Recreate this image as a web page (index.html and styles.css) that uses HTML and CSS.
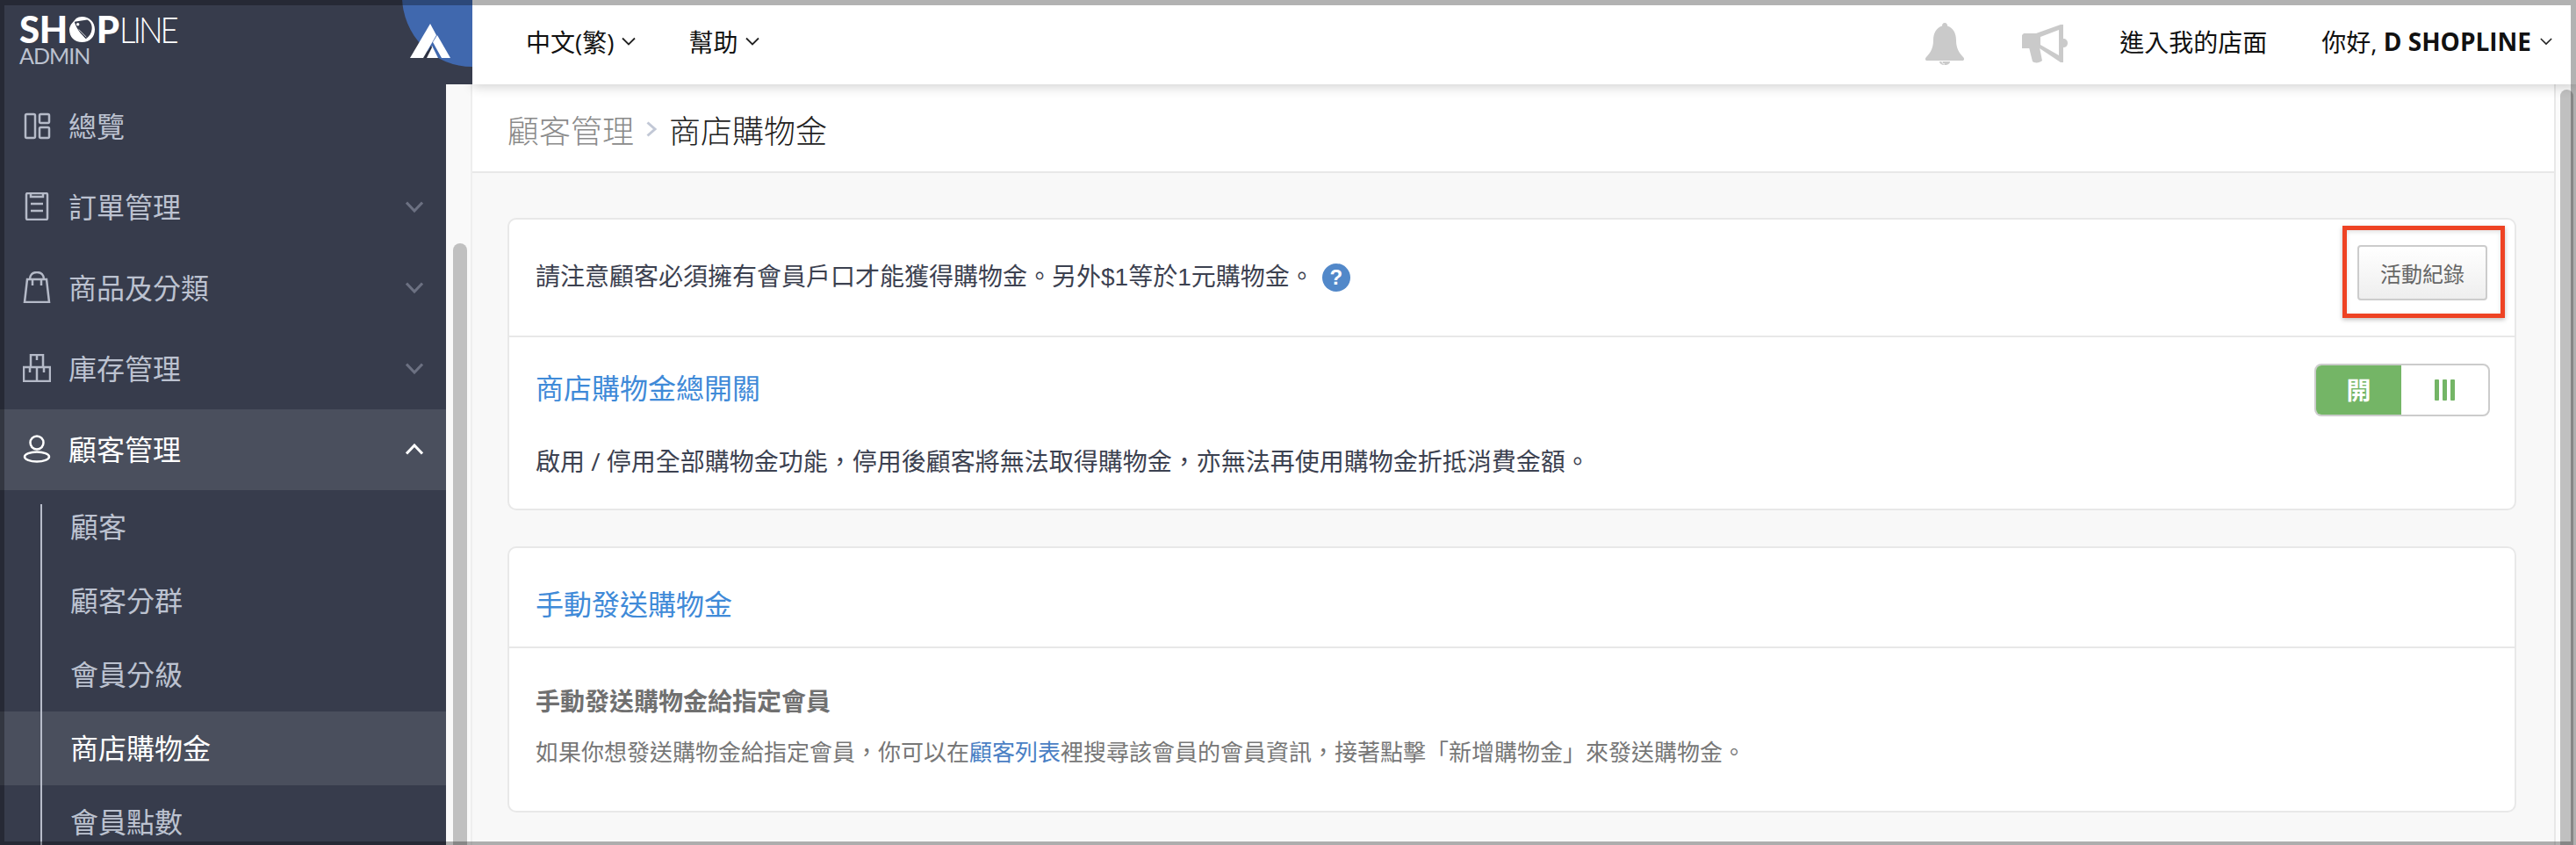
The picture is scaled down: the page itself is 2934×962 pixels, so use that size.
FILE: index.html
```html
<!DOCTYPE html>
<html lang="zh-Hant">
<head>
<meta charset="utf-8">
<title>商店購物金</title>
<link rel="stylesheet" href="styles.css">
</head>
<body>
<div class="app">
  <div class="brand">
    <div class="brand-circle"></div>
    <div class="logo">
      <div class="logo-main"><span class="logo-bold">SH</span><svg class="logo-o" viewBox="0 0 30 30" aria-label="O"><path fill="#fff" d="M15 0C23 0 30 6 30 15c0 9-6 15-15 15S0 24 0 15C0 13 1 11 2 9L8 2C10 1 12 0 15 0z"/><path fill="#373c4c" d="M6 6 21 3.500c4 2 6 6 5.500 11-.5 5-3 9-7 11.500C14 21 8 14 6 6z"/><circle cx="10" cy="9" r="1.800" fill="#fff"/><path stroke="#fff" stroke-width=".8" fill="none" d="M11 15 20 24M10 18 18 26"/></svg><span class="logo-bold">P</span><span class="logo-thin">LINE</span></div>
      <div class="logo-sub">ADMIN</div>
    </div>
    <svg class="brand-mark" viewBox="0 0 46 39"><path fill="#fff" d="M23 0 0 39H15L30 13Z"/><path fill="#fff" d="M31 13 46 39H36L26 21Z"/><path fill="#fff" d="M17 39 25 25 32 39Z"/><path fill="#2c3040" d="M16 39 24 25 25 27 19 39Z"/></svg>
  </div>

  <header class="topbar">
    <nav class="topnav">
      <a class="topnav-item">中文(繁)<svg class="caret" viewBox="0 0 16 10"><path d="M1 1.500 8 8.500 15 1.500"/></svg></a>
      <a class="topnav-item">幫助<svg class="caret" viewBox="0 0 16 10"><path d="M1 1.500 8 8.500 15 1.500"/></svg></a>
    </nav>
    <div class="topright">
      <svg class="bell" viewBox="0 0 46 48"><path fill="#cacaca" d="M23 0c2 0 3 1.500 3 3.500C33 6 36 12 36 20c0 8 3 14 8 19 2 2 1 4-1 4H3c-2 0-3-2-1-4 5-5 8-11 8-19 0-8 3-14 10-16.500C20 1.500 21 0 23 0z"/><path fill="#cacaca" d="M17 44h12c0 2-2 4-6 4s-6-2-6-4z"/><path fill="none" stroke="#fff" d="M20 44c0 2 1 3 3 3"/></svg>
      <svg class="megaphone" viewBox="0 0 52 44"><path fill="#cacaca" d="M2 10H16L44 0h3V43h-3L20 27H0V12Z"/><path fill="#fff" d="M21 14 42 6V35L21 23Z"/><path fill="#cacaca" d="M47 16c3 0 5 2 5 5s-2 5-5 5zM8 26H20l3 15c-3 3-9 3-11 1Z"/></svg>
      <a class="store-link">進入我的店面</a>
      <a class="user">你好, <b>D SHOPLINE</b><svg class="caret caret-user" viewBox="0 0 16 10"><path d="M1 1.500 8 8.500 15 1.500"/></svg></a>
    </div>
  </header>

  <aside class="sidebar">
    <ul class="menu">
      <li class="menu-item">
        <svg class="menu-icon" viewBox="0 0 32 32"><rect x="3" y="3" width="11" height="27" rx="1.500"/><rect x="19" y="3" width="11" height="10" rx="1.500"/><rect x="19" y="18" width="11" height="12" rx="1.500"/></svg>
        <span>總覽</span>
      </li>
      <li class="menu-item">
        <svg class="menu-icon" viewBox="0 0 32 32"><rect x="4" y="1" width="24" height="30" rx="1.500"/><path d="M9 1V5H23V1M9 13H23M9 21H23"/></svg>
        <span>訂單管理</span>
        <svg class="chev" viewBox="0 0 20 13"><path d="M1 1.500 10 11 19 1.500"/></svg>
      </li>
      <li class="menu-item">
        <svg class="menu-icon menu-icon-tall" viewBox="0 0 32 36"><path d="M5 9H27L30 35H2Z"/><path d="M8 9C8 4 11 1 16 1S24 4 24 9M11 9V16M21 9V16"/></svg>
        <span>商品及分類</span>
        <svg class="chev" viewBox="0 0 20 13"><path d="M1 1.500 10 11 19 1.500"/></svg>
      </li>
      <li class="menu-item">
        <svg class="menu-icon" viewBox="0 0 32 32"><path d="M9 1H23V15H9ZM1 15H16V31H1ZM16 15H31V31H16Z"/><path d="M16 1V7M8 15V21M24 15V21"/></svg>
        <span>庫存管理</span>
        <svg class="chev" viewBox="0 0 20 13"><path d="M1 1.500 10 11 19 1.500"/></svg>
      </li>
      <li class="menu-item menu-item-active">
        <svg class="menu-icon" viewBox="0 0 32 32"><circle cx="16" cy="9" r="7.500"/><ellipse cx="16" cy="25" rx="14" ry="5.500"/></svg>
        <span>顧客管理</span>
        <svg class="chev" viewBox="0 0 20 13"><path d="M1 11.500 10 2 19 11.500"/></svg>
      </li>
    </ul>
    <ul class="submenu">
      <li class="sub-item">顧客</li>
      <li class="sub-item">顧客分群</li>
      <li class="sub-item">會員分級</li>
      <li class="sub-item sub-item-active">商店購物金</li>
      <li class="sub-item">會員點數</li>
    </ul>
  </aside>

  <div class="content-area">
    <div class="side-gutter"><div class="side-thumb"></div></div>
    <main class="main">
      <div class="breadcrumb">
        <span class="crumb-parent">顧客管理</span>
        <svg class="crumb-sep" viewBox="0 0 12 18"><path d="M1.500 1.500 10 9 1.500 16.500"/></svg>
        <span class="crumb-current">商店購物金</span>
      </div>
      <div class="content">
        <section class="card">
          <div class="notice-row">
            <p class="notice">請注意顧客必須擁有會員戶口才能獲得購物金。另外$1等於1元購物金。<span class="help">?</span></p>
            <div class="btn-wrap"><button class="btn">活動紀錄</button></div>
          </div>
          <div class="switch-row">
            <div class="switch-head">
              <h2 class="card-title">商店購物金總開關</h2>
              <div class="toggle"><span class="toggle-on">開</span><span class="toggle-off"><i></i><i></i><i></i></span></div>
            </div>
            <p class="switch-desc">啟用 / 停用全部購物金功能，停用後顧客將無法取得購物金，亦無法再使用購物金折抵消費金額。</p>
          </div>
        </section>
        <section class="card card-second">
          <div class="card-head"><h2 class="card-title">手動發送購物金</h2></div>
          <div class="card-body">
            <h3 class="subtitle">手動發送購物金給指定會員</h3>
            <p class="para">如果你想發送購物金給指定會員，你可以在<a class="link">顧客列表</a>裡搜尋該會員的會員資訊，接著點擊「新增購物金」來發送購物金。</p>
          </div>
        </section>
      </div>
    </main>
    <div class="page-gutter"><div class="page-thumb"></div></div>
  </div>
</div>
<div class="frame"></div>
</body>
</html>
```
FILE: styles.css
```css
* { box-sizing: border-box; }
html, body { margin: 0; height: 100%; overflow: hidden; }
body {
  font-family: "Open Sans", "Noto Sans CJK TC", sans-serif;
  background: #f8f8f8;
  color: #3c4150;
}
ul { list-style: none; margin: 0; padding: 0; }
h2, h3, p { margin: 0; font-weight: 400; }

.app {
  display: grid;
  grid-template-columns: 538px 1fr;
  grid-template-rows: 96px 1fr;
  height: 100vh;
}

/* brand */
.brand {
  position: relative;
  z-index: 3;
  overflow: hidden;
  background: #373c4c;
  display: flex;
  padding: 18px 0 0 22px;
}
.brand-circle {
  position: absolute;
  right: -80px;
  top: -84px;
  width: 160px;
  height: 160px;
  border-radius: 50%;
  background: #4068ae;
}
.logo { position: relative; }
.logo-main {
  display: flex;
  align-items: center;
  height: 30px;
  line-height: 30px;
  font-family: Lato, sans-serif;
  font-size: 42px;
  color: #fff;
}
.logo-bold { font-weight: 900; letter-spacing: -.5px; }
.logo-thin {
  font-weight: 300;
  letter-spacing: -3.500px;
  margin-left: 1px;
  transform: scaleX(.87);
  transform-origin: left center;
}
.logo-o { width: 29px; height: 29px; margin: 0 2px; }
.logo-sub {
  font-family: Lato, sans-serif;
  font-size: 25px;
  line-height: 18px;
  margin-top: 6px;
  color: #bcc2d0;
  letter-spacing: -1px;
}
.brand-mark {
  position: absolute;
  left: 467px;
  top: 27px;
  width: 46px;
  height: 39px;
}

/* top bar */
.topbar {
  position: relative;
  z-index: 2;
  background: #fff;
  box-shadow: 0 3px 12px rgba(0, 0, 0, .18);
  display: flex;
  justify-content: space-between;
  align-items: center;
  padding: 0 27px 2px 61px;
  font-size: 28px;
  color: #111;
}
.topnav { display: flex; gap: 61px; }
.topnav-item, .user { display: flex; align-items: center; }
.topnav-item { gap: 8px; }
.caret { width: 16px; height: 10px; fill: none; stroke: #222; stroke-width: 1.800; }
.topright { display: flex; align-items: center; }
.bell { width: 46px; height: 48px; margin-top: 6px; }
.megaphone { width: 52px; height: 44px; margin: 6px 0 0 65px; }
.store-link { margin-left: 59px; }
.user { margin-left: 62px; white-space: pre; }
.user b { font-weight: 700; }
.caret-user { width: 14px; margin-left: 10px; }

/* sidebar */
.sidebar {
  background: #373c4c;
  width: 508px;
  overflow: hidden;
  padding-top: 2px;
  color: #bcc2d0;
  font-size: 32px;
  font-family: "Noto Sans CJK TC", sans-serif;
}
.menu-item {
  display: flex;
  align-items: center;
  height: 92px;
  padding: 0 26px 2px;
  gap: 20px;
}
.menu-item span { flex: 1; margin-top: -3px; }
.menu-item-active { background: #4a4f5d; color: #fff; }
.menu-icon {
  flex: none;
  width: 32px;
  height: 32px;
  fill: none;
  stroke: #b5bac8;
  stroke-width: 2.500;
}
.menu-icon-tall { height: 36px; }
.menu-item-active .menu-icon { stroke: #fff; }
.chev { width: 20px; height: 13px; fill: none; stroke: #6c7182; stroke-width: 3; }
.menu-item-active .chev { stroke: #fff; }
.submenu { position: relative; }
.submenu::before {
  content: "";
  position: absolute;
  left: 46px;
  top: 16px;
  bottom: 0;
  width: 2px;
  background: #b8bdca;
}
.sub-item {
  height: 84px;
  line-height: 80px;
  padding-left: 80px;
}
.sub-item-active { background: #4a4f5d; color: #fff; }

/* content area */
.content-area {
  display: flex;
  min-height: 0;
  margin-left: -30px;
  grid-column: 2;
  grid-row: 2;
}
.side-gutter {
  width: 30px;
  flex: none;
  background: #f9f9f9;
  border-right: 2px solid #eee;
  padding: 181px 0 0 8px;
}
.side-thumb {
  width: 16px;
  height: 100%;
  border-radius: 8px 8px 0 0;
  background: #c0c0c0;
}
.main { flex: 1; min-width: 0; }
.breadcrumb {
  height: 101px;
  padding: 3px 0 0 40px;
  background: #fff;
  border-bottom: 2px solid #e8e8e8;
  display: flex;
  align-items: center;
  font-size: 36px;
  font-weight: 300;
  font-family: "Noto Sans CJK TC", sans-serif;
}
.crumb-parent { color: #8a8a8a; }
.crumb-current { color: #222; }
.crumb-sep {
  width: 12px;
  height: 18px;
  margin: 0 14px;
  fill: none;
  stroke: #c2c8d6;
  stroke-width: 3;
}
.content { padding: 51px 43px 0 40px; }
.page-gutter {
  width: 25px;
  flex: none;
  background: #fbfbfb;
  border-left: 2px solid #e8e8e8;
  padding: 6px 0 0 5px;
}
.page-thumb {
  width: 15px;
  height: 100%;
  border-radius: 8px 8px 0 0;
  background: #c0c0c0;
}

/* cards */
.card {
  background: #fff;
  border: 2px solid #e8e8e8;
  border-radius: 10px;
}
.card-second { margin-top: 41px; }
.notice-row {
  display: flex;
  justify-content: space-between;
  align-items: center;
  height: 134px;
  padding: 0 31px 0 30px;
  border-bottom: 2px solid #e8e8e8;
}
.notice {
  display: flex;
  align-items: center;
  font-family: "Liberation Sans", "Noto Sans CJK TC", sans-serif;
  font-size: 28px;
  line-height: 40px;
}
.help {
  display: inline-block;
  width: 32px;
  height: 32px;
  margin-left: 9px;
  border-radius: 50%;
  background: #5288c9;
  color: #fff;
  font-size: 24px;
  font-weight: 700;
  line-height: 32px;
  text-align: center;
}
.btn-wrap { position: relative; margin-bottom: 11px; }
.btn-wrap::after {
  content: "";
  position: absolute;
  left: -17px;
  right: -20px;
  top: -22px;
  bottom: -20px;
  border: 5px solid #ee4324;
  box-shadow: 0 2px 5px rgba(0, 0, 0, .25), inset 0 2px 5px rgba(0, 0, 0, .12);
  pointer-events: none;
}
.btn {
  display: block;
  width: 148px;
  height: 63px;
  padding: 0;
  font: inherit;
  font-size: 24px;
  color: #666;
  background: linear-gradient(#fff, #eee);
  border: 2px solid #ccc;
  border-radius: 4px;
}
.switch-row { padding: 30px 28px 34px 30px; }
.switch-head {
  display: flex;
  justify-content: space-between;
  align-items: center;
}
.card-title {
  font-size: 32px;
  line-height: 44px;
  color: #3f8ad8;
}
.switch-head .card-title { margin-top: -4px; }
.toggle {
  display: flex;
  width: 200px;
  height: 60px;
  border: 2px solid #ccc;
  border-radius: 8px;
  overflow: hidden;
}
.toggle-on {
  width: 97px;
  background: #74b566;
  color: #fff;
  font-size: 28px;
  font-weight: 700;
  line-height: 56px;
  text-align: center;
}
.toggle-off {
  flex: 1;
  display: flex;
  justify-content: center;
  align-items: center;
  gap: 4px;
}
.toggle-off i {
  width: 5px;
  height: 24px;
  background: #74b566;
  border-radius: 1px;
}
.switch-desc {
  margin-top: 31px;
  font-size: 28px;
  line-height: 40px;
}
.card-head {
  height: 114px;
  padding: 42px 30px 0;
  border-bottom: 2px solid #e8e8e8;
}
.card-body { padding: 40px 30px 47px; }
.subtitle {
  font-size: 28px;
  font-weight: 700;
  line-height: 40px;
  color: #707070;
}
.para {
  margin-top: 18px;
  font-size: 26px;
  line-height: 40px;
  color: #777;
}
.link { color: #4a80c4; }

/* window edge */
.frame {
  position: fixed;
  inset: 0;
  z-index: 10;
  border-style: solid;
  border-color: rgba(0, 0, 0, .3);
  border-width: 6px 6px 4px 5px;
  pointer-events: none;
}
```
